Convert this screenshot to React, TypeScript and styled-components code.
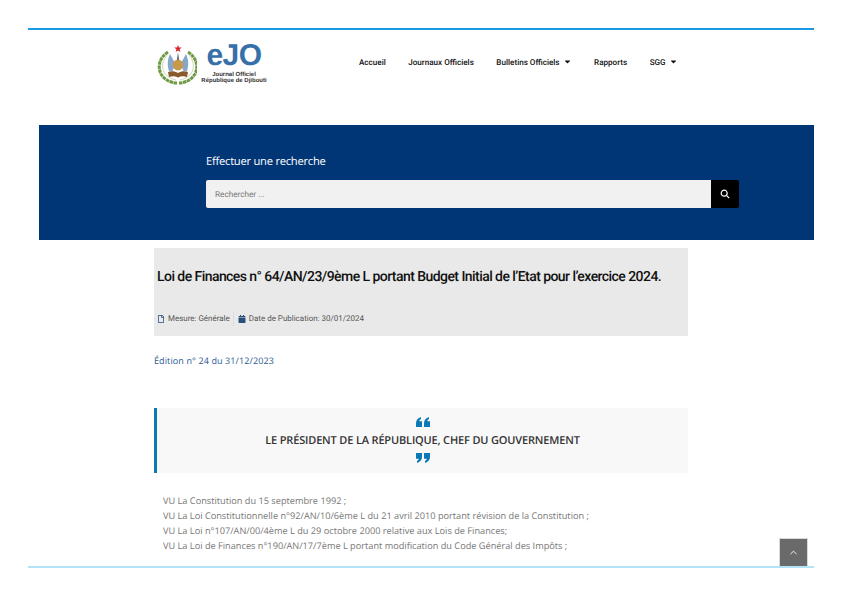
import React from 'react';
import styled, { createGlobalStyle } from 'styled-components';
import { FaCaretDown, FaCalendar, FaRegFile } from 'react-icons/fa';
import { ChevronUp } from 'lucide-react';

const GlobalStyle = createGlobalStyle`
  html, body {
    margin: 0;
    padding: 0;
    height: 595px;
    overflow: hidden;
    background: #fff;
    font-family: "Open Sans", sans-serif;
    text-rendering: geometricPrecision;
  }
`;

const Page = styled.div`
  padding: 28px 28px 0;
`;

const Frame = styled.div`
  position: relative;
  height: 536px;
  border-top: 2px solid #1b9ae4;
  border-bottom: 2px solid #b3e3f7;
  overflow: hidden;
`;

const Header = styled.header`
  display: flex;
  align-items: center;
  height: 95px;
  padding: 0 0 30px 129px;
  box-sizing: border-box;
`;

const Logo = styled.div`
  display: flex;
  align-items: flex-start;
  width: 202px;
  gap: 2px;
`;

const LogoText = styled.div`
  display: flex;
  flex-direction: column;
  align-items: center;
  width: 70px;
`;

const Brand = styled.div`
  font: 700 30px/30px "Liberation Sans", sans-serif;
  letter-spacing: -0.5px;
  color: #376fa8;
  margin-bottom: 1px;
`;

const Tagline = styled.div`
  font: 700 6px/6px "Liberation Sans", sans-serif;
  color: #333;
  white-space: nowrap;
`;

const Nav = styled.nav`
  display: flex;
  align-items: center;
  gap: 22.5px;
  padding-bottom: 2px;
`;

const NavItem = styled.a`
  display: flex;
  align-items: center;
  gap: 3px;
  font: 500 8.1px/12px Roboto, sans-serif;
  color: #111;
  white-space: nowrap;
`;

const Banner = styled.section`
  margin-left: 11px;
  height: 115px;
  background: #003676;
  padding: 29px 75px 0 167px;
  box-sizing: border-box;
`;

const BannerTitle = styled.div`
  font: 500 11.2px/16px "Open Sans", sans-serif;
  letter-spacing: -0.25px;
  color: #fff;
  margin-bottom: 10px;
`;

const SearchBar = styled.div`
  display: flex;
  height: 28px;
`;

const SearchInput = styled.div`
  flex: 1;
  display: flex;
  align-items: center;
  padding: 1px 0 0 9px;
  background: #f1f1f1;
  border-radius: 2px 0 0 2px;
  font: 400 8.2px Roboto, sans-serif;
  color: #777;
`;

const SearchButton = styled.div`
  width: 28px;
  display: flex;
  align-items: center;
  justify-content: center;
  background: #000;
  border-radius: 0 2px 2px 0;
`;

const Content = styled.main`
  width: 534px;
  margin: 8px 0 0 126px;
`;

const TitleCard = styled.div`
  height: 88px;
  background: #e9e9e9;
  padding: 20px 3px 0;
  box-sizing: border-box;
`;

const Title = styled.h1`
  margin: 0;
  font: 500 14px/18px Roboto, sans-serif;
  letter-spacing: -0.56px;
  color: #111;
  white-space: nowrap;
`;

const Meta = styled.div`
  display: flex;
  align-items: center;
  margin-top: 26px;
  font: 400 7.98px/14px Roboto, sans-serif;
  color: #555;
`;

const MetaItem = styled.span`
  display: flex;
  align-items: center;
  gap: 3px;
  & + & {
    margin-left: 3px;
    padding-left: 4px;
    border-left: 1px solid #dcdcdc;
  }
  svg {
    color: #2b4f7d;
  }
`;

const Edition = styled.a`
  display: block;
  margin-top: 18px;
  font: 400 9px/14px "Open Sans", sans-serif;
  letter-spacing: 0.11px;
  color: #2c5a94;
`;

const Quote = styled.blockquote`
  display: flex;
  flex-direction: column;
  align-items: center;
  height: 65px;
  margin: 40px 0 0;
  background: #f8f8f8;
  border-left: 3px solid #0a79b6;
  box-sizing: border-box;
  padding-top: 9px;
`;

const QuoteMark = styled.svg`
  display: block;
  width: 14px;
  height: 10px;
  fill: #0a79b6;
`;

const QuoteText = styled.div`
  font: 600 11px/14px "Open Sans", sans-serif;
  letter-spacing: -0.16px;
  color: #333;
  margin: 7px 0 5px;
`;

const Clauses = styled.div`
  margin-top: 20px;
  padding-left: 9px;
`;

const Clause = styled.p`
  margin: 0;
  font: 400 9.2px/15px "Open Sans", sans-serif;
  color: #777;
  white-space: nowrap;
`;

const ScrollTop = styled.div`
  position: absolute;
  right: 6px;
  bottom: 0;
  width: 29px;
  height: 28px;
  display: flex;
  align-items: center;
  justify-content: center;
  background: #6a6a6a;
  border: 1px solid #d8d8d8;
  border-bottom: 0;
  box-sizing: border-box;
  color: #fff;
`;

// national emblem, drawn roughly from the reference at small size
const Emblem: React.FC = () => (
  <svg width="40" height="44" viewBox="3 1 40 44">
    <path d="M14 12C6 17 3 26 7 34c3 5 9 9 16 9" fill="none" stroke="#6f9a45" strokeWidth="3" strokeDasharray="3.6 0.5" />
    <path d="M34 12c8 5 11 14 7 22-3 5-9 9-16 9" fill="none" stroke="#6f9a45" strokeWidth="3" strokeDasharray="3.6 0.5" />
    <path d="M14 14C9 19 7 26 10 32c2 4 7 7 12 8M34 14c5 5 7 12 4 18-2 4-7 7-12 8" fill="none" stroke="#cfd8b0" strokeWidth="1" />
    <path d="M24 5l1 2.600h2.800l-2.200 1.700.8 2.700-2.400-1.600-2.400 1.600.8-2.700-2.200-1.700H23z" fill="#d6252b" />
    <path d="M16 14l5.500 10-3 7H15c-2-6-1.500-12 1-17zM32 14l-5.500 10 3 7H33c2-6 1.500-12-1-17z" fill="#86a6cc" />
    <path d="M24 12l1.200 9h-2.400z" fill="#4d5d72" />
    <circle cx="24" cy="25" r="5.400" fill="#c79a4b" />
    <path d="M14 32c3-1.500 7-1 10 1 3-2 7-2.500 10-1l-1 5c-3-1-6-1-9 .5-3-1.500-6-1.500-9-.5z" fill="#8a5a2b" />
  </svg>
);

const SearchIcon: React.FC = () => (
  <svg width="10" height="10" viewBox="0 0 10 10" fill="none" stroke="#fff" strokeWidth="1.2">
    <circle cx="4.200" cy="4.200" r="3" />
    <path d="M6.400 6.400L9.200 9.200" />
  </svg>
);

const App: React.FC = () => {
  return (
    <Page>
      <GlobalStyle />
      <Frame>
        <Header>
          <Logo>
            <Emblem />
            <LogoText>
              <Brand>eJO</Brand>
              <Tagline>Journal Officiel</Tagline>
              <Tagline>République de Djibouti</Tagline>
            </LogoText>
          </Logo>
          <Nav>
            <NavItem>Accueil</NavItem>
            <NavItem>Journaux Officiels</NavItem>
            <NavItem>Bulletins Officiels <FaCaretDown size={9} /></NavItem>
            <NavItem>Rapports</NavItem>
            <NavItem>SGG <FaCaretDown size={9} /></NavItem>
          </Nav>
        </Header>
        <Banner>
          <BannerTitle>Effectuer une recherche</BannerTitle>
          <SearchBar>
            <SearchInput>Rechercher ...</SearchInput>
            <SearchButton><SearchIcon /></SearchButton>
          </SearchBar>
        </Banner>
        <Content>
          <TitleCard>
            <Title>Loi de Finances n° 64/AN/23/9ème L portant Budget Initial de l’Etat pour l’exercice 2024.</Title>
            <Meta>
              <MetaItem><FaRegFile size={8} />Mesure: Générale</MetaItem>
              <MetaItem><FaCalendar size={8} />Date de Publication: 30/01/2024</MetaItem>
            </Meta>
          </TitleCard>
          <Edition>Édition n° 24 du 31/12/2023</Edition>
          <Quote>
            <QuoteMark viewBox="0 0 14 10">
              <path d="M0 6c0-3 2-5 5-6v2C4 2.600 3.400 3.300 3.300 4.300H6V10H0zM8 6c0-3 2-5 5-6v2c-1 .6-1.600 1.300-1.700 2.300H14V10H8z" />
            </QuoteMark>
            <QuoteText>LE PRÉSIDENT DE LA RÉPUBLIQUE, CHEF DU GOUVERNEMENT</QuoteText>
            <QuoteMark viewBox="0 0 14 10">
              <path d="M6 4c0 3-2 5-5 6V8c1-.6 1.600-1.300 1.700-2.300H0V0h6zM14 4c0 3-2 5-5 6V8c1-.6 1.600-1.300 1.700-2.300H8V0h6z" />
            </QuoteMark>
          </Quote>
          <Clauses>
            <Clause>VU La Constitution du 15 septembre 1992 ;</Clause>
            <Clause>VU La Loi Constitutionnelle n°92/AN/10/6ème L du 21 avril 2010 portant révision de la Constitution ;</Clause>
            <Clause>VU La Loi n°107/AN/00/4ème L du 29 octobre 2000 relative aux Lois de Finances;</Clause>
            <Clause>VU La Loi de Finances n°190/AN/17/7ème L portant modification du Code Général des Impôts ;</Clause>
          </Clauses>
        </Content>
        <ScrollTop><ChevronUp size={11} /></ScrollTop>
      </Frame>
    </Page>
  );
};

export default App;
